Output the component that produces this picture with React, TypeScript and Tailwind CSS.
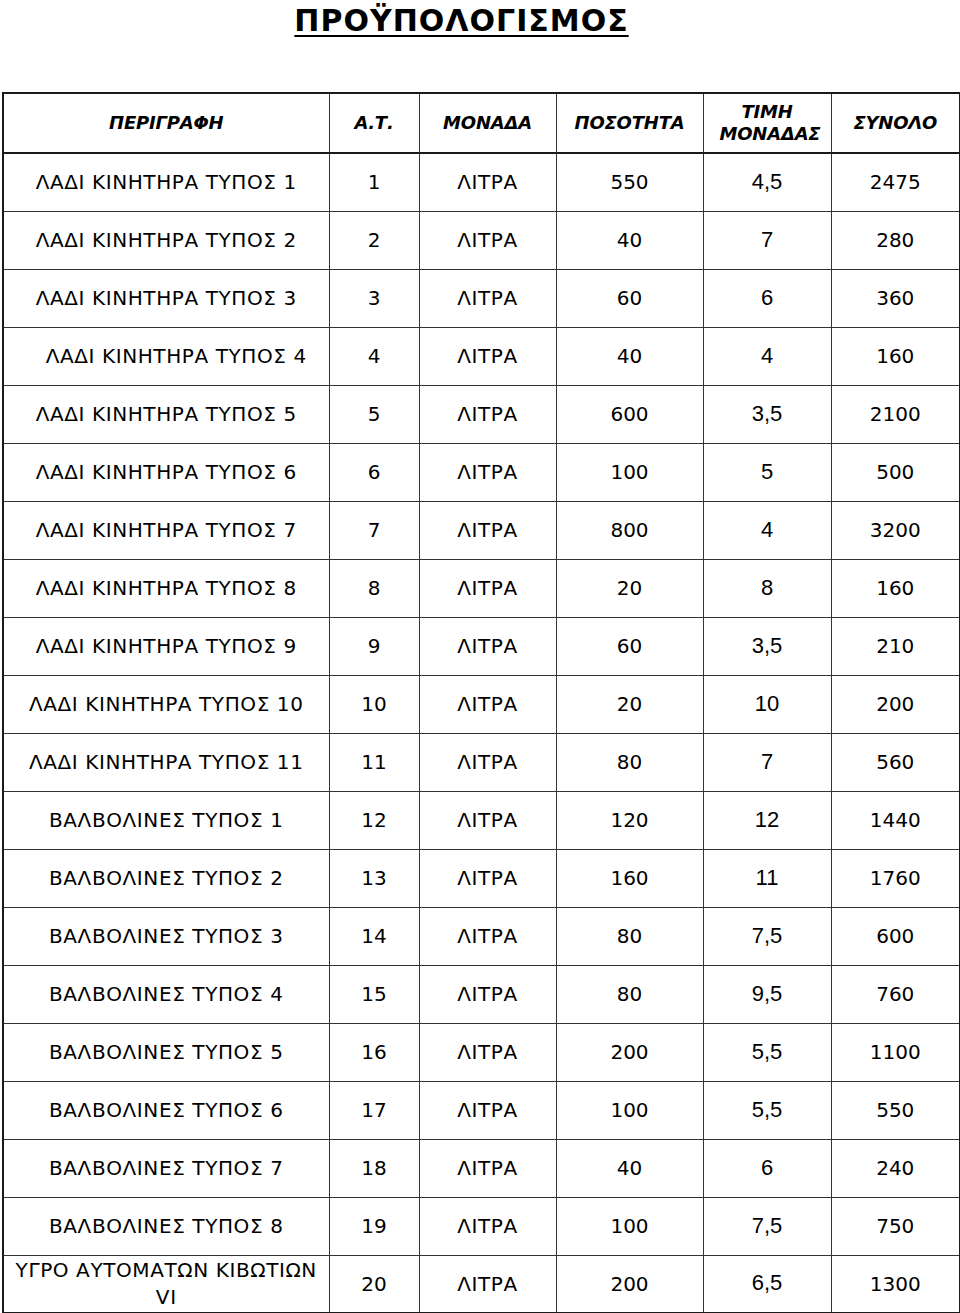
import React from "react";

const body = "font-['DejaVu_Sans',sans-serif]";
const arial = "font-['Liberation_Sans',Arial,sans-serif]";

const rows: string[][] = [
  ["ΛΑΔΙ ΚΙΝΗΤΗΡΑ ΤΥΠΟΣ 1", "1", "ΛΙΤΡΑ", "550", "4,5", "2475"],
  ["ΛΑΔΙ ΚΙΝΗΤΗΡΑ ΤΥΠΟΣ 2", "2", "ΛΙΤΡΑ", "40", "7", "280"],
  ["ΛΑΔΙ ΚΙΝΗΤΗΡΑ ΤΥΠΟΣ 3", "3", "ΛΙΤΡΑ", "60", "6", "360"],
  ["ΛΑΔΙ ΚΙΝΗΤΗΡΑ ΤΥΠΟΣ 4", "4", "ΛΙΤΡΑ", "40", "4", "160"],
  ["ΛΑΔΙ ΚΙΝΗΤΗΡΑ ΤΥΠΟΣ 5", "5", "ΛΙΤΡΑ", "600", "3,5", "2100"],
  ["ΛΑΔΙ ΚΙΝΗΤΗΡΑ ΤΥΠΟΣ 6", "6", "ΛΙΤΡΑ", "100", "5", "500"],
  ["ΛΑΔΙ ΚΙΝΗΤΗΡΑ ΤΥΠΟΣ 7", "7", "ΛΙΤΡΑ", "800", "4", "3200"],
  ["ΛΑΔΙ ΚΙΝΗΤΗΡΑ ΤΥΠΟΣ 8", "8", "ΛΙΤΡΑ", "20", "8", "160"],
  ["ΛΑΔΙ ΚΙΝΗΤΗΡΑ ΤΥΠΟΣ 9", "9", "ΛΙΤΡΑ", "60", "3,5", "210"],
  ["ΛΑΔΙ ΚΙΝΗΤΗΡΑ ΤΥΠΟΣ 10", "10", "ΛΙΤΡΑ", "20", "10", "200"],
  ["ΛΑΔΙ ΚΙΝΗΤΗΡΑ ΤΥΠΟΣ 11", "11", "ΛΙΤΡΑ", "80", "7", "560"],
  ["ΒΑΛΒΟΛΙΝΕΣ ΤΥΠΟΣ 1", "12", "ΛΙΤΡΑ", "120", "12", "1440"],
  ["ΒΑΛΒΟΛΙΝΕΣ ΤΥΠΟΣ 2", "13", "ΛΙΤΡΑ", "160", "11", "1760"],
  ["ΒΑΛΒΟΛΙΝΕΣ ΤΥΠΟΣ 3", "14", "ΛΙΤΡΑ", "80", "7,5", "600"],
  ["ΒΑΛΒΟΛΙΝΕΣ ΤΥΠΟΣ 4", "15", "ΛΙΤΡΑ", "80", "9,5", "760"],
  ["ΒΑΛΒΟΛΙΝΕΣ ΤΥΠΟΣ 5", "16", "ΛΙΤΡΑ", "200", "5,5", "1100"],
  ["ΒΑΛΒΟΛΙΝΕΣ ΤΥΠΟΣ 6", "17", "ΛΙΤΡΑ", "100", "5,5", "550"],
  ["ΒΑΛΒΟΛΙΝΕΣ ΤΥΠΟΣ 7", "18", "ΛΙΤΡΑ", "40", "6", "240"],
  ["ΒΑΛΒΟΛΙΝΕΣ ΤΥΠΟΣ 8", "19", "ΛΙΤΡΑ", "100", "7,5", "750"],
];

const cell = "border border-[#333]";

export default function App() {
  return (
    <div className={`bg-white text-black w-[960px] min-h-[1313px] ${body}`}>
      {/* Title */}
      <div className="flex justify-center pt-[2px] pr-[37px]">
        <h1 className="text-[30px] font-bold tracking-[1px] underline underline-offset-[4px] decoration-2 leading-[38px]">
          ΠΡΟΫΠΟΛΟΓΙΣΜΟΣ
        </h1>
      </div>

      {/* Table */}
      <div className="pl-[2px] pt-[52px]">
        <table className="w-[957px] table-fixed border-collapse border-[2px] border-[#1a1a1a] text-[20px]">
          <colgroup>
            <col className="w-[326px]" />
            <col className="w-[90px]" />
            <col className="w-[137px]" />
            <col className="w-[147px]" />
            <col className="w-[128px]" />
            <col className="w-[129px]" />
          </colgroup>
          <thead>
            <tr className="h-[60px] border-b-[2px] border-[#1a1a1a] text-[18px] font-bold italic tracking-[-0.2px] leading-[22px]">
              <th className={cell}>ΠΕΡΙΓΡΑΦΗ</th>
              <th className={cell}>Α.Τ.</th>
              <th className={cell}>ΜΟΝΑΔΑ</th>
              <th className={cell}>ΠΟΣΟΤΗΤΑ</th>
              <th className={`${cell} px-4`}>ΤΙΜΗ ΜΟΝΑΔΑΣ</th>
              <th className={cell}>ΣΥΝΟΛΟ</th>
            </tr>
          </thead>
          <tbody>
            {rows.map((r, i) => (
              <tr key={i} className="h-[58px] text-center">
                <td className={`${cell} tracking-[0.6px] ${i === 3 ? "pl-[20px]" : ""}`}>{r[0]}</td>
                <td className={cell}>{r[1]}</td>
                <td className={`${cell} tracking-[0.6px]`}>{r[2]}</td>
                <td className={cell}>{r[3]}</td>
                <td className={`${cell} pb-[2px] ${arial} text-[22px]`}>{r[4]}</td>
                <td className={cell}>{r[5]}</td>
              </tr>
            ))}
            <tr className="h-[58px] text-center">
              <td className={`${cell} tracking-[0.6px] leading-[27px]`}>
                ΥΓΡΟ ΑΥΤΟΜΑΤΩΝ ΚΙΒΩΤΙΩΝ
                <br />
                VI
              </td>
              <td className={cell}>20</td>
              <td className={`${cell} tracking-[0.6px]`}>ΛΙΤΡΑ</td>
              <td className={cell}>200</td>
              <td className={`${cell} pb-[2px] ${arial} text-[22px]`}>6,5</td>
              <td className={cell}>1300</td>
            </tr>
          </tbody>
        </table>
      </div>
    </div>
  );
}
